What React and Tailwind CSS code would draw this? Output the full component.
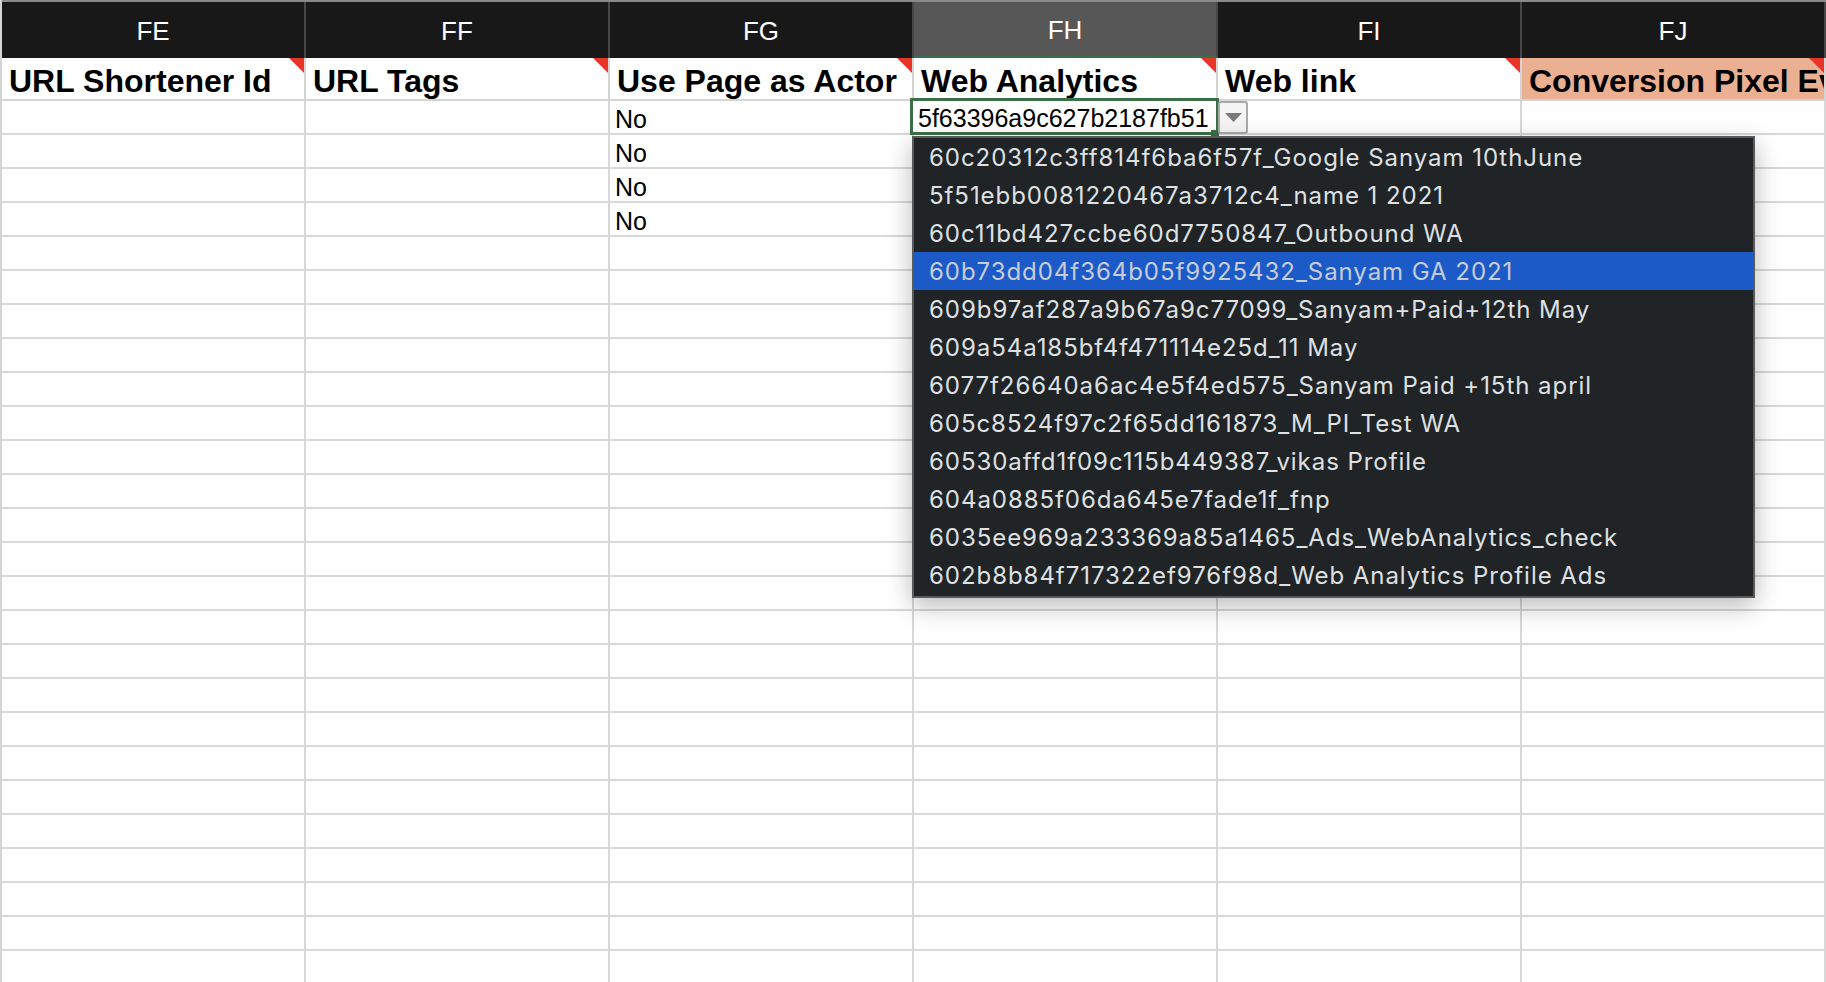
import React from "react";

const cols = ["FE", "FF", "FG", "FH", "FI", "FJ"];
const fields = [
  "URL Shortener Id",
  "URL Tags",
  "Use Page as Actor",
  "Web Analytics",
  "Web link",
  "Conversion Pixel Event",
];
const widths = ["w-[304px]", "w-[304px]", "w-[304px]", "w-[304px]", "w-[304px]", "w-[304px]"];

const options = [
  "60c20312c3ff814f6ba6f57f_Google Sanyam 10thJune",
  "5f51ebb0081220467a3712c4_name 1 2021",
  "60c11bd427ccbe60d7750847_Outbound WA",
  "60b73dd04f364b05f9925432_Sanyam GA 2021",
  "609b97af287a9b67a9c77099_Sanyam+Paid+12th May",
  "609a54a185bf4f471114e25d_11 May",
  "6077f26640a6ac4e5f4ed575_Sanyam Paid +15th april",
  "605c8524f97c2f65dd161873_M_PI_Test WA",
  "60530affd1f09c115b449387_vikas Profile",
  "604a0885f06da645e7fade1f_fnp",
  "6035ee969a233369a85a1465_Ads_WebAnalytics_check",
  "602b8b84f717322ef976f98d_Web Analytics Profile Ads",
];

const rows = Array.from({ length: 26 }, (_, i) => i);

function Dropdown() {
  return (
    <div className="absolute left-[-2px] top-[35px] z-10 w-[843px] h-[462px] bg-[#202427] border-2 border-[#5a5a5a] shadow-[0_8px_24px_rgba(0,0,0,0.28)] flex flex-col">
      {options.map((o, i) => (
        <div
          key={o}
          className={`h-[38px] shrink-0 flex items-center pl-[15px] pt-[1px] text-[24px] tracking-[0.95px] leading-none whitespace-nowrap ${
            i === 3 ? "bg-[#1c5bc7] text-[#c6ccd8]" : "text-[#dfe0e1]"
          }`}
          style={{ fontFamily: 'Inter, "Liberation Sans", sans-serif' }}
        >
          {o}
        </div>
      ))}
    </div>
  );
}

function SelectedCell() {
  return (
    <>
      <div className="absolute left-[-4px] top-[-3px] z-10 w-[309px] h-[37px] border-[3px] border-[#3a7047] bg-white flex items-center pl-[5px] pt-[3px] text-[25px] leading-none text-black whitespace-nowrap overflow-hidden">
        5f63396a9c627b2187fb51
      </div>
      <div className="absolute left-[297px] top-[29px] z-10 w-[8px] h-[7px] bg-[#3a7047]" />
      <div className="absolute left-[304px] top-0 z-10 w-[30px] h-[33px] rounded-[3px] border-2 border-[#a9a9a9] bg-[#f4f4f4] flex items-center justify-center">
        <svg width="17" height="9" viewBox="0 0 17 9">
          <path d="M0 0 H17 L8.5 9 Z" fill="#7a7a7a" />
        </svg>
      </div>
      <Dropdown />
    </>
  );
}

export default function App() {
  return (
    <div
      className="relative w-[1826px] h-[982px] overflow-hidden bg-white border-l-2 border-[#d4d4d4]"
      style={{ fontFamily: '"Liberation Sans", Arial, sans-serif' }}
    >
      {/* Column letters */}
      <div className="flex h-[58px] border-t-2 border-[#8a8a8a]">
        {cols.map((c, i) => (
          <div
            key={c}
            className={`${widths[i]} shrink-0 flex items-center justify-center pt-[2px] text-[26px] text-white border-r-2 border-[#474747] ${
              c === "FH" ? "bg-[#575757] border-b-2 border-b-[#3a7047]" : "bg-[#181818]"
            }`}
          >
            {c}
          </div>
        ))}
      </div>

      {/* Field names */}
      <div className="flex h-[43px] border-b-2 border-[#d4d4d4]">
        {fields.map((f, i) => (
          <div
            key={f}
            className={`${widths[i]} shrink-0 relative flex items-center pt-[5px] pl-[7px] overflow-hidden whitespace-nowrap border-r-2 border-[#d4d4d4] text-[32px] font-bold leading-none text-black ${
              i === 5 ? "bg-[#ebb092]" : "bg-white"
            }`}
          >
            {f}
            <span className="absolute top-0 right-0 w-0 h-0 border-l-[15px] border-l-transparent border-t-[15px] border-t-[#e8352a]" />
          </div>
        ))}
      </div>

      {/* Data rows */}
      {rows.map((r) => (
        <div key={r} className="flex h-[34px] border-b-2 border-[#d8d8d8]">
          {cols.map((c, i) => (
            <div
              key={c}
              className={`${widths[i]} shrink-0 relative flex items-center pl-[5px] pt-[4px] border-r-2 border-[#d8d8d8] text-[25px] leading-none text-black`}
            >
              {c === "FG" && r < 4 ? "No" : ""}
              {c === "FH" && r === 0 ? <SelectedCell /> : null}
            </div>
          ))}
        </div>
      ))}
    </div>
  );
}
